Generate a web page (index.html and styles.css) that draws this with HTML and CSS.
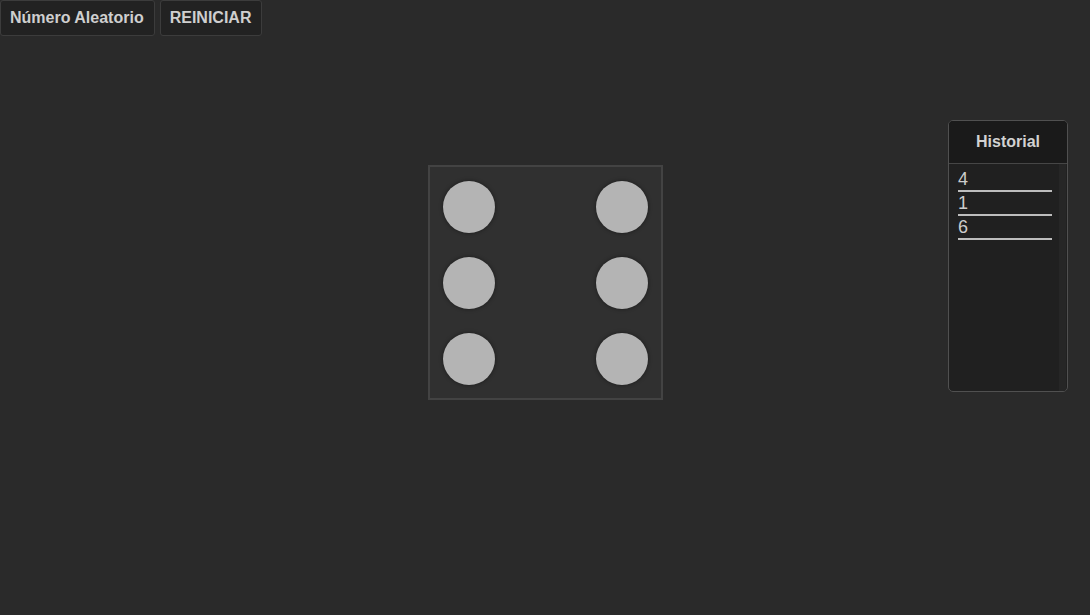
FILE: index.html
```html
<!DOCTYPE html>
<html lang="es">
<head>
<meta charset="utf-8">
<title>Dado</title>
<link rel="stylesheet" href="styles.css">
</head>
<body>
<div class="toolbar">
  <button class="btn">Número Aleatorio</button>
  <button class="btn">REINICIAR</button>
</div>
<div class="main">
  <div class="spacer"></div>
  <div class="dice">
    <div class="col">
      <span class="pip"></span><span class="pip"></span><span class="pip"></span>
    </div>
    <div class="col">
      <span class="pip"></span><span class="pip"></span><span class="pip"></span>
    </div>
  </div>
  <div class="side">
    <div class="history">
      <div class="history-head">Historial</div>
      <div class="history-body">
        <ul class="list">
          <li>4</li>
          <li>1</li>
          <li>6</li>
        </ul>
        <div class="track"></div>
      </div>
    </div>
  </div>
</div>
</body>
</html>
```
FILE: styles.css
```css
html, body {
  margin: 0;
  padding: 0;
  background: #2a2a2a;
  height: 100%;
}
body {
  font-family: "Liberation Sans", Arial, sans-serif;
  color: #cccccc;
}
.toolbar {
  display: flex;
  gap: 5px;
  height: 36px;
}
.btn {
  font-family: "Liberation Sans", Arial, sans-serif;
  font-weight: bold;
  font-size: 16px;
  color: #cfcfcf;
  background: #222222;
  border: 1px solid #3c3c3c;
  border-radius: 3px;
  padding: 0 10px 0 9px;
  height: 36px;
  margin: 0;
}
.main {
  display: grid;
  grid-template-columns: 1fr auto 1fr;
}
.dice {
  margin-top: 129px;
  width: 231px;
  height: 231px;
  box-sizing: content-box;
  background: #303030;
  border: 2px solid #434343;
  display: flex;
  justify-content: space-between;
  padding: 0;
}
.col {
  display: flex;
  flex-direction: column;
  gap: 24px;
  padding: 14px 13px 0 13px;
}
.pip {
  display: block;
  width: 52px;
  height: 52px;
  border-radius: 50%;
  background: #b4b4b4;
  box-shadow: 0 0 4px rgba(0,0,0,0.45);
}
.side {
  display: flex;
  justify-content: flex-end;
  align-items: flex-start;
  padding-right: 22px;
}
.history {
  margin-top: 84px;
  width: 118px;
  height: 270px;
  border: 1px solid #505050;
  border-radius: 5px;
  overflow: hidden;
  display: flex;
  flex-direction: column;
  background: #202020;
}
.history-head {
  height: 42px;
  flex: none;
  display: flex;
  align-items: center;
  justify-content: center;
  font-weight: bold;
  font-size: 16px;
  color: #d2d2d2;
  background: #1a1a1a;
  border-bottom: 1px solid #464646;
}
.history-body {
  flex: 1;
  display: flex;
}
.list {
  list-style: none;
  margin: 0;
  padding: 4px 0 0 9px;
  flex: 1;
}
.list li {
  width: 94px;
  height: 22px;
  line-height: 23px;
  font-size: 18px;
  color: #cccccc;
  border-bottom: 2px solid #bdbdbd;
}
.track {
  width: 7px;
  background: #262626;
  margin-right: 1px;
}
```
